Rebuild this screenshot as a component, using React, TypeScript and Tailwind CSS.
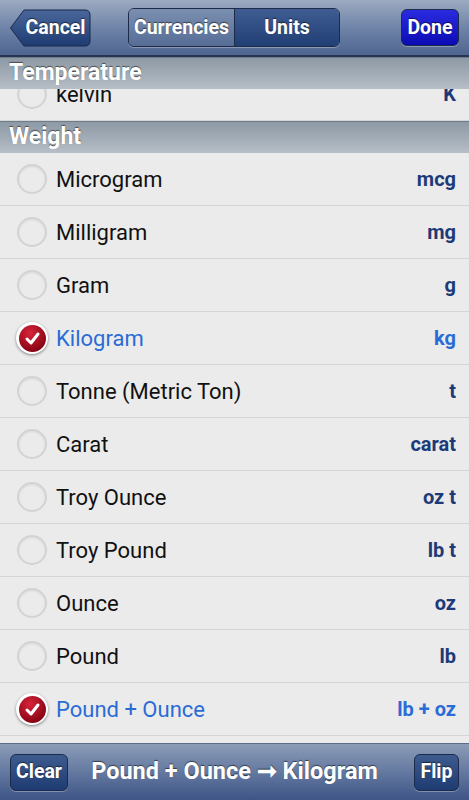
import React from "react"

interface Unit {
  name: string
  abbr: string
  checked?: boolean
}

const weights: Unit[] = [
  { name: "Microgram", abbr: "mcg" },
  { name: "Milligram", abbr: "mg" },
  { name: "Gram", abbr: "g" },
  { name: "Kilogram", abbr: "kg", checked: true },
  { name: "Tonne (Metric Ton)", abbr: "t" },
  { name: "Carat", abbr: "carat" },
  { name: "Troy Ounce", abbr: "oz t" },
  { name: "Troy Pound", abbr: "lb t" },
  { name: "Ounce", abbr: "oz" },
  { name: "Pound", abbr: "lb" },
  { name: "Pound + Ounce", abbr: "lb + oz", checked: true },
]

const shadow = "[text-shadow:0_-1px_1px_rgba(0,0,0,0.55)]"

function Radio({ checked }: { checked?: boolean }) {
  if (checked) {
    return (
      <div className="w-[32px] h-[32px] rounded-full bg-white shadow-[0_1px_3px_rgba(0,0,0,0.45)] flex items-center justify-center flex-shrink-0">
        <div className="w-[27px] h-[27px] rounded-full bg-[radial-gradient(circle_at_40%_30%,#d8243a,#8c0616_70%,#6a0010)] flex items-center justify-center">
          <svg width="17" height="17" viewBox="0 0 17 17">
            <path d="M3 9 L7 13 L14 4" fill="none" stroke="#fff" strokeWidth="3" strokeLinecap="round" strokeLinejoin="round" />
          </svg>
        </div>
      </div>
    )
  }
  return (
    <div className="w-[30px] h-[30px] rounded-full border-[2px] border-[#d3d3d3] shadow-[inset_0_1px_2px_rgba(0,0,0,0.08)] flex-shrink-0 mx-[1px]" />
  )
}

function Row({ u }: { u: Unit }) {
  return (
    <div className="h-[53px] flex items-center pl-[16px] pr-[13px] border-b border-[#d5d5d5]">
      <Radio checked={u.checked} />
      <span className={`ml-[8px] flex-1 text-[22px] ${u.checked ? "text-[#2a6bd6]" : "text-[#111]"}`}>{u.name}</span>
      <span className={`text-[20px] font-bold ${u.checked ? "text-[#2a6bd6]" : "text-[#1d3a78]"}`}>{u.abbr}</span>
    </div>
  )
}

function SectionHeader({ title }: { title: string }) {
  return (
    <div className={`h-[32px] flex items-center px-[9px] border-t border-[#6f7c89] bg-gradient-to-b from-[#8d99a5] to-[#b6bec6] text-white text-[23px] font-bold ${shadow}`}>
      {title}
    </div>
  )
}

function NavButton({ label, className }: { label: string; className: string }) {
  return (
    <div className={`h-[37px] flex items-center justify-center rounded-[6px] border border-[#1c2b4a] shadow-[0_1px_0_rgba(255,255,255,0.3)] text-white text-[19.5px] font-bold ${shadow} ${className}`}>
      {label}
    </div>
  )
}

export default function App() {
  return (
    <div className="w-[469px] h-[800px] flex flex-col bg-[#ebebeb] overflow-hidden font-['Roboto',sans-serif]">
      {/* top bar */}
      <div className="h-[57px] flex items-center px-[10px] bg-gradient-to-b from-[#9dabc1] via-[#6f84a8] to-[#4e6590] border-b-2 border-[#27344f] flex-shrink-0">
        <div className="relative w-[81px] h-[38px]">
          <svg className="absolute inset-0" width="81" height="38" viewBox="0 0 81 38">
            <defs>
              <linearGradient id="cg" x1="0" y1="0" x2="0" y2="1">
                <stop offset="0" stopColor="#4a679c" />
                <stop offset="1" stopColor="#1f3c72" />
              </linearGradient>
            </defs>
            <path d="M0.5 19 L14 1 H75 Q80 1 80 6 V32 Q80 37 75 37 H14 Z" fill="url(#cg)" stroke="#1b2946" />
          </svg>
          <span className={`absolute inset-0 flex items-center justify-center pl-[10px] text-white text-[19.5px] font-bold ${shadow}`}>Cancel</span>
        </div>
        <div className="flex ml-[37px] rounded-[6px] border border-[#1c2b4a] overflow-hidden shadow-[0_1px_0_rgba(255,255,255,0.3)]">
          <div className={`w-[106px] h-[37px] flex items-center justify-center bg-gradient-to-b from-[#7b8fb0] to-[#566d96] border-r border-[#1c2b4a] text-white text-[19.5px] font-bold ${shadow}`}>Currencies</div>
          <div className={`w-[104px] h-[37px] flex items-center justify-center bg-gradient-to-b from-[#3f5d92] to-[#213f75] text-white text-[19.5px] font-bold ${shadow}`}>Units</div>
        </div>
        <div className="flex-1" />
        <NavButton label="Done" className="w-[58px] bg-gradient-to-b from-[#2a2ae0] to-[#0a0ab4]" />
      </div>

      {/* list */}
      <div className="flex-1 overflow-hidden">
        <SectionHeader title="Temperature" />
        <div className="h-[32px] overflow-hidden">
          <div className="-mt-[21px]">
            <Row u={{ name: "kelvin", abbr: "K" }} />
          </div>
        </div>
        <SectionHeader title="Weight" />
        {weights.map((u) => (
          <Row key={u.name} u={u} />
        ))}
      </div>

      {/* bottom bar */}
      <div className="h-[57px] flex items-center px-[10px] bg-gradient-to-b from-[#8c9cb7] via-[#6479a0] to-[#3e5586] border-t border-[#5d6d88] flex-shrink-0">
        <NavButton label="Clear" className="w-[58px] bg-gradient-to-b from-[#3e5b90] to-[#1f3c72]" />
        <span className={`flex-1 text-center pr-[13px] text-white text-[23.5px] font-bold ${shadow}`}>Pound + Ounce ➞ Kilogram</span>
        <NavButton label="Flip" className="w-[45px] bg-gradient-to-b from-[#3e5b90] to-[#1f3c72]" />
      </div>
    </div>
  )
}
